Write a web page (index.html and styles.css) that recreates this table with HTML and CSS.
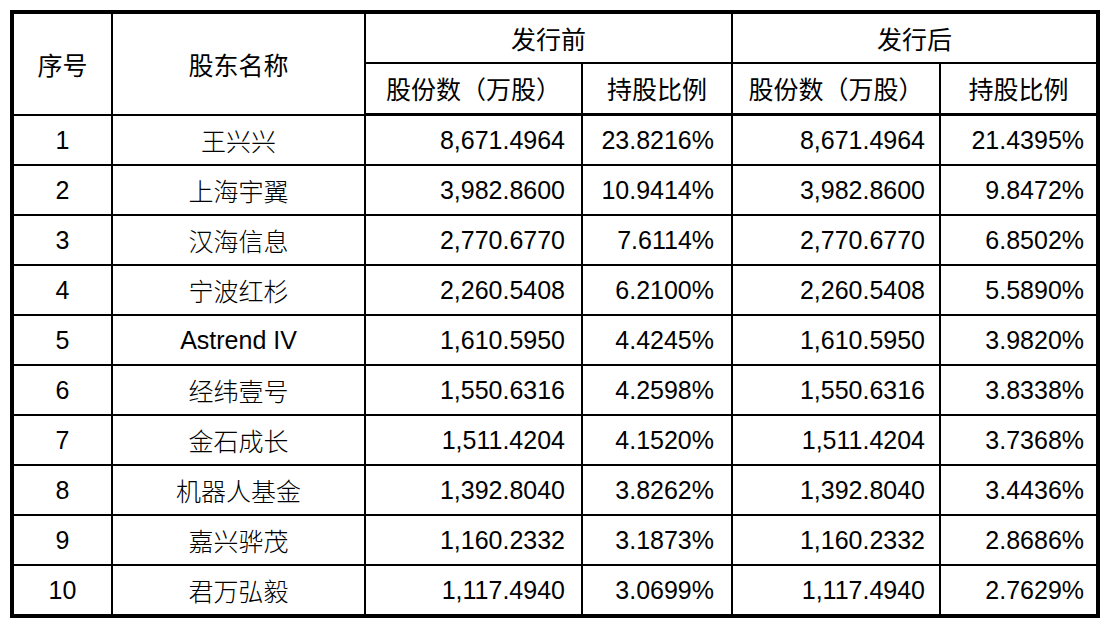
FILE: index.html
```html
<!DOCTYPE html>
<html lang="zh-CN">
<head>
<meta charset="utf-8">
<title>股东持股情况</title>
<link rel="stylesheet" href="styles.css">
</head>
<body>
<table class="holders">
  <colgroup>
    <col class="c-no"><col class="c-name"><col class="c-shares"><col class="c-pct"><col class="c-shares2"><col class="c-pct2">
  </colgroup>
  <thead>
    <tr class="h1">
      <th rowspan="2">序号</th>
      <th rowspan="2">股东名称</th>
      <th colspan="2">发行前</th>
      <th colspan="2" class="last">发行后</th>
    </tr>
    <tr class="h2">
      <th>股份数（万股）</th>
      <th>持股比例</th>
      <th>股份数（万股）</th>
      <th class="last">持股比例</th>
    </tr>
  </thead>
  <tbody>
    <tr><td class="no">1</td><td class="name">王兴兴</td><td class="num n1">8,671.4964</td><td class="num n2">23.8216%</td><td class="num n3">8,671.4964</td><td class="num n4 last">21.4395%</td></tr>
    <tr><td class="no">2</td><td class="name">上海宇翼</td><td class="num n1">3,982.8600</td><td class="num n2">10.9414%</td><td class="num n3">3,982.8600</td><td class="num n4 last">9.8472%</td></tr>
    <tr><td class="no">3</td><td class="name">汉海信息</td><td class="num n1">2,770.6770</td><td class="num n2">7.6114%</td><td class="num n3">2,770.6770</td><td class="num n4 last">6.8502%</td></tr>
    <tr><td class="no">4</td><td class="name">宁波红杉</td><td class="num n1">2,260.5408</td><td class="num n2">6.2100%</td><td class="num n3">2,260.5408</td><td class="num n4 last">5.5890%</td></tr>
    <tr><td class="no">5</td><td class="name latin">Astrend IV</td><td class="num n1">1,610.5950</td><td class="num n2">4.4245%</td><td class="num n3">1,610.5950</td><td class="num n4 last">3.9820%</td></tr>
    <tr><td class="no">6</td><td class="name">经纬壹号</td><td class="num n1">1,550.6316</td><td class="num n2">4.2598%</td><td class="num n3">1,550.6316</td><td class="num n4 last">3.8338%</td></tr>
    <tr><td class="no">7</td><td class="name">金石成长</td><td class="num n1">1,511.4204</td><td class="num n2">4.1520%</td><td class="num n3">1,511.4204</td><td class="num n4 last">3.7368%</td></tr>
    <tr><td class="no">8</td><td class="name">机器人基金</td><td class="num n1">1,392.8040</td><td class="num n2">3.8262%</td><td class="num n3">1,392.8040</td><td class="num n4 last">3.4436%</td></tr>
    <tr><td class="no">9</td><td class="name">嘉兴骅茂</td><td class="num n1">1,160.2332</td><td class="num n2">3.1873%</td><td class="num n3">1,160.2332</td><td class="num n4 last">2.8686%</td></tr>
    <tr class="lastrow"><td class="no">10</td><td class="name">君万弘毅</td><td class="num n1">1,117.4940</td><td class="num n2">3.0699%</td><td class="num n3">1,117.4940</td><td class="num n4 last">2.7629%</td></tr>
  </tbody>
</table>
</body>
</html>
```
FILE: styles.css
```css
html, body {
  margin: 0;
  padding: 0;
  background: #ffffff;
}
body {
  padding: 10px;
  font-family: "Liberation Sans", Arial, "Noto Sans CJK SC", sans-serif;
  color: #000;
}
.holders {
  border-collapse: separate;
  border-spacing: 0;
  border: 4px solid #000;
  width: 1090px;
  table-layout: fixed;
  font-size: 25px;
}
.c-no { width: 99px; }
.c-name { width: 253px; }
.c-shares { width: 217px; }
.c-pct { width: 150px; }
.c-shares2 { width: 208px; }
.c-pct2 { width: 155px; }

.holders th,
.holders td {
  padding: 0;
  border-right: 2px solid #000;
  border-bottom: 2px solid #000;
  vertical-align: middle;
  text-align: center;
  line-height: 1;
  white-space: nowrap;
  overflow: hidden;
}
.holders .last { border-right: none; }
.holders .lastrow td { border-bottom: none; }

.holders th {
  font-family: "Noto Sans CJK SC", sans-serif;
  font-weight: 400;
  font-size: 25px;
}
.holders .h1 th { height: 48px; }
.holders .h2 th { height: 49px; border-bottom-width: 3px; }
.holders tbody td { height: 48px; }

.holders td.name {
  font-family: "Noto Sans CJK SC", sans-serif;
  font-weight: 300;
}
.holders td.name.latin {
  font-family: "Liberation Sans", Arial, sans-serif;
  font-weight: 400;
}
.holders td.num { text-align: right; }
.holders td.n1 { padding-right: 16px; }
.holders td.n2 { padding-right: 17px; }
.holders td.n3 { padding-right: 14px; }
.holders td.n4 { padding-right: 12px; }
```
